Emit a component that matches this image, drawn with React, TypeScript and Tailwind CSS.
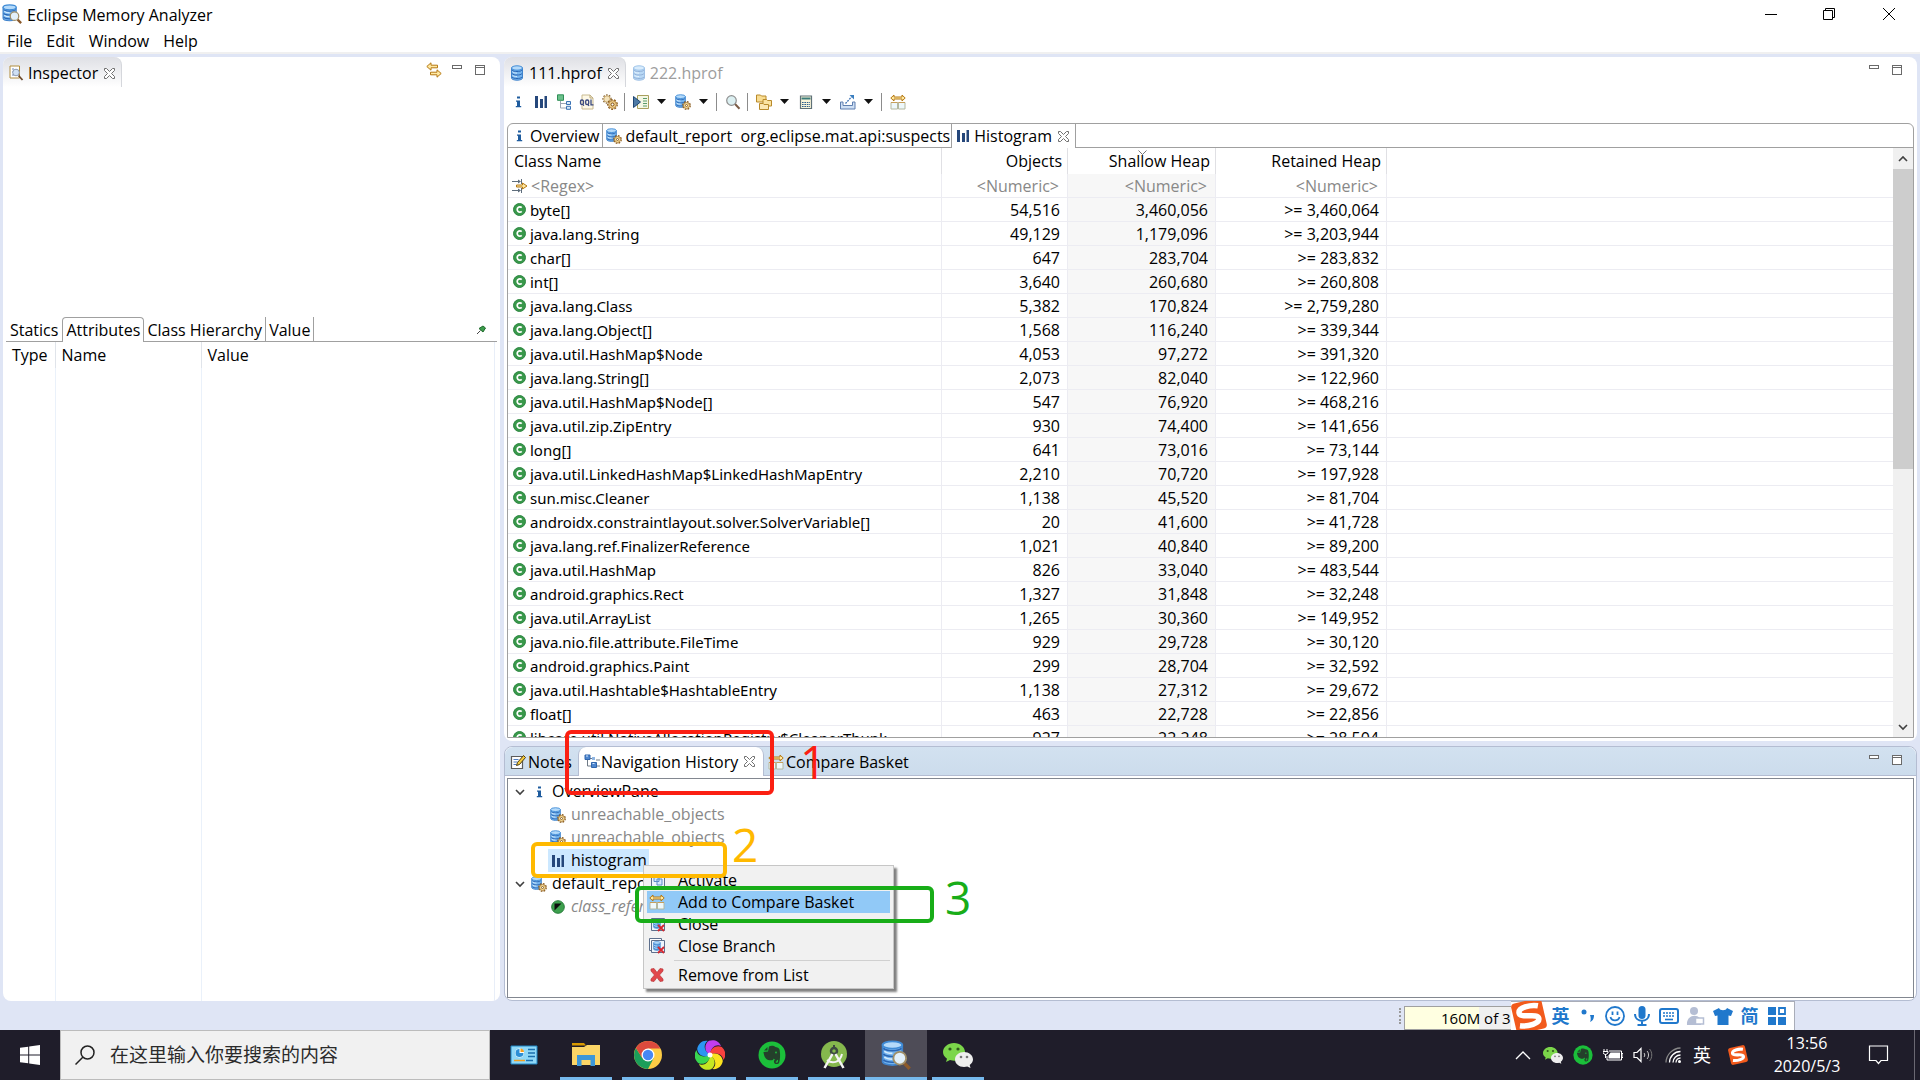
import type { ReactNode } from 'react'
import { clsx } from 'clsx'

type IconProps = { className?: string }

function Svg({ className, box = 16, children }: { className?: string; box?: number; children: ReactNode }) {
  return (
    <svg viewBox={`0 0 ${box} ${box}`} className={clsx('shrink-0', className ?? 'size-4')} fill="none" aria-hidden>
      {children}
    </svg>
  )
}

/* ---------- editor icons ---------- */

function DbShape() {
  return (
    <>
      <path d="M2.500 3v10c0 1.200 2.400 2.200 5.500 2.200s5.500-1 5.500-2.200V3z" fill="#74b4ee" stroke="#3f83cc" />
      <path d="M3 5c1 1.300 3 1.500 5 1.500s4-.2 5-1.500M3 8.500c1 1.300 3 1.500 5 1.500s4-.2 5-1.500M3 12c1 1.300 3 1.500 5 1.500s4-.2 5-1.500" stroke="#2b66b4" />
      <path d="M3.500 6.800c1 1 2.500 1.300 4.500 1.300M3.500 10.300c1 1 2.500 1.300 4.500 1.300" stroke="#d6ecfd" />
      <ellipse cx="8" cy="3" rx="5.500" ry="2.200" fill="#b4dafa" stroke="#3f8bd6" />
    </>
  )
}

function DbIcon({ className }: IconProps) {
  return (
    <Svg className={className}>
      <DbShape />
    </Svg>
  )
}

function GearShape() {
  return (
    <>
      <circle cx="11.500" cy="11.500" r="3.700" stroke="#8a5a1a" strokeWidth="1.400" strokeDasharray="1.700 1.200" />
      <circle cx="11.500" cy="11.500" r="3" fill="#f3d996" stroke="#a87833" strokeWidth=".8" />
      <circle cx="11.500" cy="11.500" r="1" fill="#fff" stroke="#7a4d14" strokeWidth=".8" />
    </>
  )
}

function DbGearIcon({ className }: IconProps) {
  return (
    <Svg className={className}>
      <g transform="translate(-1.500 0) scale(.88)">
        <DbShape />
      </g>
      <GearShape />
    </Svg>
  )
}

function DbSearchIcon({ className }: IconProps) {
  return (
    <Svg className={className}>
      <g transform="translate(-1.500 0) scale(.95 .88)">
        <DbShape />
      </g>
      <path d="m12.300 12.300 3 3" stroke="#8b5a2b" strokeWidth="1.800" />
      <circle cx="10" cy="9.700" r="3.400" fill="#e2f0fb" stroke="#a08f68" />
    </Svg>
  )
}

function InspectorIcon() {
  return (
    <Svg>
      <path d="M2 1h9.500v12H2z" fill="#fff" stroke="#b08c3c" />
      <path d="M4 4h2M4 7h1M4 10h2" stroke="#6b87b8" />
      <path d="m10.500 10.500 4 4.500" stroke="#6e4a2c" strokeWidth="1.800" />
      <circle cx="8" cy="7.500" r="3.300" fill="#cfe0f4" stroke="#8d9bb2" />
    </Svg>
  )
}

function InfoIcon() {
  return (
    <Svg>
      <path d="M7 2.500h3v2H7zM6 6.500h4V12h1.200v1.200H5.800V12H7V7.700H6z" fill="#1f5c9e" />
    </Svg>
  )
}

function BarsIcon() {
  return (
    <Svg>
      <path d="M2 2h3v12H2zM7 5h3v9H7zM11.500 2h2.500v12h-2.500z" fill="#25477b" />
    </Svg>
  )
}

function TreeIcon() {
  return (
    <Svg>
      <path d="M4.500 7v7H10M4.500 9.500H10" stroke="#9aa4b4" />
      <path d="M1.500.8h6v5.500h-6z" fill="#6cc08b" stroke="#2f8f57" />
      <path d="M10.500 7.500h4v3h-4zM10.500 12.300h4v3h-4z" fill="#d7e9fb" stroke="#3a72b4" />
    </Svg>
  )
}

function OqlIcon() {
  return (
    <Svg>
      <path d="M3 1h8l3 3v11H3z" fill="#fdf8e6" stroke="#c9ba90" />
      <path d="M11 1v3h3" stroke="#b9a779" />
      <rect x="1.500" y="6" width="3" height="4.500" rx="1.300" stroke="#3b4a80" strokeWidth="1.300" />
      <path d="M3.500 10 5 12" stroke="#3b4a80" />
      <rect x="6.700" y="6" width="3" height="4.500" rx="1.300" stroke="#3b4a80" strokeWidth="1.300" />
      <path d="m8.700 10 1.300 2M12 5.500v5.300h2.500" stroke="#3b4a80" strokeWidth="1.300" />
    </Svg>
  )
}

function GearsIcon() {
  return (
    <Svg>
      <circle cx="5" cy="5" r="4" stroke="#8a6a3a" strokeWidth="1.400" strokeDasharray="1.600 1.300" />
      <circle cx="5" cy="5" r="3.200" fill="#f3e3bb" stroke="#c09a5a" strokeWidth=".8" />
      <circle cx="10.500" cy="10.500" r="4.700" stroke="#8a5a1a" strokeWidth="1.400" strokeDasharray="1.900 1.400" />
      <circle cx="10.500" cy="10.500" r="3.900" fill="#efcf8a" stroke="#a87833" strokeWidth=".8" />
      <circle cx="10.500" cy="10.500" r="1.500" fill="#fff" stroke="#7a4d14" />
    </Svg>
  )
}

function RunReportIcon() {
  return (
    <Svg>
      <path d="M4.500 1.500h11v13h-11z" fill="#f4f7e4" stroke="#a9a05e" />
      <path d="M10 4.500h4M10 7h4M10 9.500h4M10 12h4" stroke="#5b9c6b" />
      <path d="M.5 2.500 7.500 8l-7 5.500z" fill="#4d7aa5" stroke="#1f4673" />
    </Svg>
  )
}

function MagnifierIcon() {
  return (
    <Svg>
      <path d="m9.800 9.800 4.700 5" stroke="#7a5a44" strokeWidth="2" />
      <circle cx="6.500" cy="6.500" r="4.800" fill="#dcf0f2" stroke="#8f8f8f" strokeWidth="1.200" />
    </Svg>
  )
}

function FoldersIcon() {
  return (
    <Svg>
      <path d="M.5 1h4l1 1h4.500v6H.500z" fill="#f9dd92" stroke="#b98a2b" />
      <path d="M7 5.500h3.500l1 1h4V12H7z" fill="#fbe3a0" stroke="#b98a2b" />
      <path d="M3.500 9.500H7l1 1h4.500v5h-9z" fill="#fbe7b2" stroke="#b98a2b" />
    </Svg>
  )
}

function CalcIcon() {
  return (
    <Svg>
      <path d="M2.500 2h11v12.500h-11z" fill="#fbf6da" stroke="#5f7178" strokeWidth="1.200" />
      <path d="M3.500 3.500h9v2h-9z" fill="#3b7c7a" />
      <path d="M4 8.500h8M4 10.500h8M4 12.500h8" stroke="#2d5f8f" strokeWidth="1.200" strokeDasharray="1.600 .8" />
    </Svg>
  )
}

function ExportIcon() {
  return (
    <Svg>
      <path d="M.5 8v7h14.500V8h-2.500v3.500H3V8z" fill="#cfe0f4" stroke="#5f7fb0" />
      <path d="m5.500 9.500 6-6.500" stroke="#3a6fb2" strokeWidth="1.300" strokeDasharray="1.800 1" />
      <path d="M9.500 1H14v4.500z" fill="#3a7fc0" />
    </Svg>
  )
}

function CompareIcon({ className }: IconProps) {
  return (
    <Svg className={className}>
      <path d="M.8 4 4 1v2h8V1l3.200 3L12 7V5H4v2z" fill="#ffe9a3" stroke="#b57812" />
      <path d="M1 8.500h6.500v6.500H1zM8.500 8.500H15v6.500H8.500z" fill="#eef8fb" stroke="#b3b8a0" />
      <path d="M1 8.500h6.500M8.500 8.500H15" stroke="#c79f5a" />
    </Svg>
  )
}

function CaretDown() {
  return (
    <Svg className="size-[9px]" box={9}>
      <path d="M0 2h9L4.500 7z" fill="#111" />
    </Svg>
  )
}

function CloseX({ className }: IconProps) {
  return (
    <Svg className={clsx('size-[11px]', className)} box={11}>
      <path d="M.5.5h2l3 3 3-3h2v2l-3 3 3 3v2h-2l-3-3-3 3h-2v-2l3-3-3-3z" fill="#fff" stroke="#6f6f6f" />
    </Svg>
  )
}

function RegexIcon() {
  return (
    <Svg>
      <path d="M0 3.500h8M0 12.500h8M9.500 1v5M9.500 10v5" stroke="#5e6d7c" />
      <path d="m6 1.500 3 2-3 2zM6 10.500l3 2-3 2z" fill="#5e6d7c" />
      <path d="M4.500 7h6V5l4.500 3-4.500 3V9h-6z" fill="#ffe9a3" stroke="#b57812" />
    </Svg>
  )
}

function ClassIcon() {
  return (
    <Svg className="size-[13px]" box={13}>
      <circle cx="6.500" cy="6.500" r="6" fill="#38984a" stroke="#2f8743" />
      <path d="M8.700 4.700A2.600 2.600 0 1 0 8.700 8.300" stroke="#fff" strokeWidth="1.700" />
    </Svg>
  )
}

function NavHistoryIcon() {
  return (
    <Svg>
      <path d="M3.500 5v7H9M3.500 4.500H9M12 6h4M13 12h3" stroke="#6f7a86" />
      <path d="M1 1h5v4.500H1z" fill="#4d86cf" stroke="#2f65ac" />
      <path d="M7.500 8.500h5v5h-5z" fill="#4d86cf" stroke="#2f65ac" />
      <path d="M8 3h3v3H8z" fill="#8fb5e2" />
      <path d="M2 2h2M8.500 9.500h2" stroke="#d5e7fb" />
    </Svg>
  )
}

function NotesIcon() {
  return (
    <Svg>
      <path d="M1.500 2.500h11v12h-11z" fill="#fff" stroke="#5c5c5c" strokeWidth="1.200" />
      <path d="M3.500 5.500h5M3.500 8h4M3.500 10.500h3" stroke="#4f7dc0" />
      <path d="m6.500 11.500 1-3 6-7 2 2-6 7z" fill="#f6cc3d" stroke="#4c3b12" />
    </Svg>
  )
}

function LinkEditorIcon() {
  return (
    <Svg>
      <path d="M.8 4.500 5 .8v2.400h6.500v2.600H5v2.400z" fill="#ffe9a3" stroke="#b57812" />
      <path d="M15.200 11.500 11 7.800v2.400H4.500v2.600H11v2.400z" fill="#ffe9a3" stroke="#b57812" />
    </Svg>
  )
}

function PinIcon() {
  return (
    <Svg className="size-[9px]" box={9}>
      <path d="M0 9 3.500 5.500" stroke="#444" />
      <path d="M2 3.500 6 1 8.500 3 6 7z" fill="#3c9c4c" stroke="#1f6b2c" />
    </Svg>
  )
}

function ChevronDown({ className }: IconProps) {
  return (
    <Svg className={clsx('h-[10px] w-[10px]', className)} box={10}>
      <path d="m1 3 4 4 4-4" stroke="#404040" strokeWidth="1.600" />
    </Svg>
  )
}

function WindowIcon({ stacked, close }: { stacked?: boolean; close?: boolean }) {
  return (
    <Svg>
      {stacked && <path d="M.5.5h12v12H.5z" fill="#fff" stroke="#5d6f8c" />}
      <path d="M2.500 2.500h13v12h-13z" fill="#eef4fb" stroke="#5d6f8c" />
      {close ? (
        <>
          <g transform="translate(3 3) scale(.62)">
            <DbShape />
          </g>
          <path d="m9 9 6 6M15 9l-6 6" stroke="#d5272f" strokeWidth="1.800" />
        </>
      ) : (
        <path d="M5 4.500h5v5H5zM8 7h5v6H8z" fill="#d5e7fb" stroke="#5b8cc6" />
      )}
    </Svg>
  )
}

function RemoveIcon() {
  return (
    <Svg>
      <path d="m2 2 3-.5 3 4 3-4 3 .5v2l-3.500 4 3.500 4v2l-3 .5-3-4-3 4-3-.5v-2l3.500-4L2 4z" fill="#e2474b" stroke="#b9383c" strokeWidth=".7" />
    </Svg>
  )
}

function RefIcon() {
  return (
    <Svg className="size-[14px]" box={14}>
      <circle cx="7" cy="7" r="6.300" fill="#3da04d" stroke="#2a7d3d" />
      <path d="M3.500 3.500h7l-7 7z" fill="#0d0d0d" />
    </Svg>
  )
}

/* ---------- taskbar icons ---------- */

function SogouIcon({ className }: IconProps) {
  return (
    <Svg className={className} box={36}>
      <g transform="rotate(-13 18 18)">
        <rect x="2.500" y="2.500" width="31" height="31" rx="4" fill="#f25a1c" />
        <path d="M29 10C22 7 9 7.500 9 13c0 6 18 3.500 18 9.500 0 5-12 6-20 3" stroke="#fff" strokeWidth="5.500" />
      </g>
    </Svg>
  )
}

function WeChatIcon({ className }: IconProps) {
  return (
    <Svg className={className} box={30}>
      <path d="M11 3C5 3 0 7 0 12c0 3 1.500 5 4 6.700L3 22l4-2c8 2.500 15-2 15-8 0-5-5-9-11-9z" fill="#7bd64a" />
      <path d="M21 12c-5 0-9 3.200-9 7.500s4 7.500 9 7.500c1.200 0 2.300-.2 3.300-.5L27.500 28l-.8-3c2-1.400 3.300-3.300 3.300-5.500 0-4.300-4-7.500-9-7.500z" fill="#eeeeee" />
      <circle cx="7" cy="9" r="1.600" fill="#2f5a1c" />
      <circle cx="15" cy="9" r="1.600" fill="#2f5a1c" />
      <circle cx="18" cy="17" r="1.300" fill="#777" />
      <circle cx="24" cy="17" r="1.300" fill="#777" />
    </Svg>
  )
}

function EvernoteIcon({ className }: IconProps) {
  return (
    <Svg className={className} box={28}>
      <circle cx="14" cy="14" r="13.500" fill="#1bbf3a" />
      <path d="M11 5.500c2-1 5-.8 6.500.5 3 .3 4 1.500 4.300 4 .5 4 .4 8-.6 11.500-.6 2-4.700 2.300-5.200-.3-.4-2 1-3 2.800-2.500v1.500c-1.400-.2-1.600 1.300-.3 1.500 1.700.1 1.700-1.500 1.300-3-1.500.5-3.300.2-4-1.200-.5 1.800-2 2-4.300 1.700C8 18.700 6 16 5.500 11L10 10.500z" fill="#24402b" />
      <path d="M9.500 6v3.500H6z" fill="#24402b" />
      <circle cx="18" cy="11.500" r=".9" fill="#1bbf3a" />
    </Svg>
  )
}

function WindowsIcon() {
  return (
    <Svg className="size-5" box={20}>
      <path d="M0 2.800 8.200 1.700v7.700H0zM9.200 1.500 20 0v9.400H9.200zM0 10.400h8.200v7.900L0 17.200zM9.200 10.400H20V20L9.200 18.500z" fill="#fff" />
    </Svg>
  )
}

function CardIcon() {
  return (
    <Svg className="size-7" box={28}>
      <path d="M1 5h26v18H1z" fill="#8fd8f8" stroke="#1f86c4" />
      <circle cx="9.500" cy="12" r="4.500" fill="#fff" />
      <path d="M9.500 12V8a4 4 0 1 0 4 4z" fill="#2b8fd6" />
      <path d="M10.500 11V7.500a4 4 0 0 1 3.500 3.500z" fill="#f4a020" />
      <path d="M18 8.500h7M18 12h7M18 15.500h7" stroke="#1b6fae" strokeWidth="1.500" />
      <path d="M4 19.500h11" stroke="#f4a020" strokeWidth="1.500" />
      <path d="M16 19.500h7" stroke="#1b6fae" strokeWidth="1.500" />
    </Svg>
  )
}

function FolderIcon() {
  return (
    <Svg className="size-7" box={28}>
      <path d="M0 2h12l2 2.500H0z" fill="#d99a00" />
      <path d="M0 6h12l3-2h13v20H0z" fill="#fbd566" />
      <path d="M5 25V14h18v11h-4.500v-6h-9v6z" fill="#3d97d8" />
    </Svg>
  )
}

function ChromeIcon() {
  return (
    <Svg className="size-7" box={28}>
      <circle cx="14" cy="14" r="14" fill="#fdcc45" />
      <path d="M14 28A14 14 0 0 1 1.900 7l6.500 10.200L19.600 17.200z" fill="#1b9e5a" />
      <path d="M26.400 7.500H14l-5.600 9.700L1.900 7a14 14 0 0 1 24.500.5z" fill="#dc4a3d" />
      <circle cx="14" cy="14" r="6.500" fill="#fff" />
      <circle cx="14" cy="14" r="5.200" fill="#4687f4" />
    </Svg>
  )
}

const PETALS = [
  { angle: 0, fill: '#c33df0' },
  { angle: 60, fill: '#f8423f' },
  { angle: 120, fill: '#fbe21f' },
  { angle: 180, fill: '#c6e622' },
  { angle: 240, fill: '#39d650' },
  { angle: 300, fill: '#2b96f2' },
]

function PinwheelIcon() {
  return (
    <Svg className="size-[30px]" box={30}>
      {PETALS.map((p) => (
        <path
          key={p.angle}
          d="M15 15C9 12 9 4 14 .8c5-1.500 10 0 12 5.200-4-2-10 0-11 9z"
          fill={p.fill}
          transform={`rotate(${p.angle} 15 15)`}
        />
      ))}
      <circle cx="15" cy="15" r="2.500" fill="#fff" />
    </Svg>
  )
}

function AndroidStudioIcon() {
  return (
    <Svg className="size-7" box={28}>
      <circle cx="14" cy="13" r="13" fill="#85b84d" />
      <circle cx="14" cy="10" r="3" stroke="#3d4a42" strokeWidth="2.500" />
      <path d="M14 4v4" stroke="#3d4a42" strokeWidth="2" />
      <path d="M12.500 13 4.500 27M15.500 13l8 14" stroke="#f4f4f4" strokeWidth="2.500" />
      <path d="M7 19c5 4 13 3 15-6" stroke="#f4f4f4" strokeWidth="2" />
    </Svg>
  )
}

/* ---------- data ---------- */

const ROWS = [
  ['byte[]', '54,516', '3,460,056', '3,460,064'],
  ['java.lang.String', '49,129', '1,179,096', '3,203,944'],
  ['char[]', '647', '283,704', '283,832'],
  ['int[]', '3,640', '260,680', '260,808'],
  ['java.lang.Class', '5,382', '170,824', '2,759,280'],
  ['java.lang.Object[]', '1,568', '116,240', '339,344'],
  ['java.util.HashMap$Node', '4,053', '97,272', '391,320'],
  ['java.lang.String[]', '2,073', '82,040', '122,960'],
  ['java.util.HashMap$Node[]', '547', '76,920', '468,216'],
  ['java.util.zip.ZipEntry', '930', '74,400', '141,656'],
  ['long[]', '641', '73,016', '73,144'],
  ['java.util.LinkedHashMap$LinkedHashMapEntry', '2,210', '70,720', '197,928'],
  ['sun.misc.Cleaner', '1,138', '45,520', '81,704'],
  ['androidx.constraintlayout.solver.SolverVariable[]', '20', '41,600', '41,728'],
  ['java.lang.ref.FinalizerReference', '1,021', '40,840', '89,200'],
  ['java.util.HashMap', '826', '33,040', '483,544'],
  ['android.graphics.Rect', '1,327', '31,848', '32,248'],
  ['java.util.ArrayList', '1,265', '30,360', '149,952'],
  ['java.nio.file.attribute.FileTime', '929', '29,728', '30,120'],
  ['android.graphics.Paint', '299', '28,704', '32,592'],
  ['java.util.Hashtable$HashtableEntry', '1,138', '27,312', '29,672'],
  ['float[]', '463', '22,728', '22,856'],
  ['libcore.util.NativeAllocationRegistry$CleanerThunk', '927', '22,248', '28,504'],
]

const TOOLS: { label: string; icon?: ReactNode; menu?: boolean; divider?: boolean }[] = [
  { label: 'Overview', icon: <InfoIcon /> },
  { label: 'Histogram', icon: <BarsIcon /> },
  { label: 'Dominator tree', icon: <TreeIcon /> },
  { label: 'OQL', icon: <OqlIcon /> },
  { label: 'Thread overview', icon: <GearsIcon /> },
  { label: 'd1', divider: true },
  { label: 'Run report', icon: <RunReportIcon />, menu: true },
  { label: 'Query browser', icon: <DbGearIcon />, menu: true },
  { label: 'd2', divider: true },
  { label: 'Find', icon: <MagnifierIcon /> },
  { label: 'd3', divider: true },
  { label: 'Group', icon: <FoldersIcon />, menu: true },
  { label: 'Calculate', icon: <CalcIcon />, menu: true },
  { label: 'Export', icon: <ExportIcon />, menu: true },
  { label: 'd4', divider: true },
  { label: 'Compare', icon: <CompareIcon /> },
]

const TASKS = [
  { label: 'Control Panel', icon: <CardIcon />, running: false },
  { label: 'File Explorer', icon: <FolderIcon />, running: true },
  { label: 'Chrome', icon: <ChromeIcon />, running: true },
  { label: 'Browser', icon: <PinwheelIcon />, running: true },
  { label: 'Evernote', icon: <EvernoteIcon className="size-7" />, running: true },
  { label: 'Android Studio', icon: <AndroidStudioIcon />, running: true },
  { label: 'Eclipse Memory Analyzer', icon: <DbSearchIcon className="size-[30px]" />, running: true, active: true },
  { label: 'WeChat', icon: <WeChatIcon className="size-[30px]" />, running: true },
]

/* ---------- shared bits ---------- */

function PaneButtons({ className }: IconProps) {
  return (
    <div className={clsx('ml-auto flex gap-[13px]', className)}>
      <button type="button" aria-label="Minimize" className="flex size-[10px]">
        <span className="h-1 w-full border border-[#6a6a6a] bg-white" />
      </button>
      <button type="button" aria-label="Maximize" className="flex size-[10px] border border-[#6a6a6a] bg-white">
        <span className="h-[2px] w-full border-b border-[#6a6a6a]" />
      </button>
    </div>
  )
}

/* ---------- window chrome ---------- */

function TitleBar() {
  return (
    <header className="bg-white">
      <div className="flex h-7 items-center pl-[2px]">
        <DbSearchIcon className="size-5" />
        <h1 className="ml-[5px] pt-px">Eclipse Memory Analyzer</h1>
        <div className="ml-auto flex">
          <button type="button" aria-label="Minimize" className="flex h-7 w-[58px] items-center justify-center">
            <span className="h-px w-3 bg-black" />
          </button>
          <button type="button" aria-label="Restore" className="flex h-7 w-[58px] items-center justify-center">
            <Svg className="size-3" box={12}>
              <path d="M.5 2.500h9v9h-9zM2.500 2.500v-2h9v9h-2" stroke="#000" />
            </Svg>
          </button>
          <button type="button" aria-label="Close" className="flex h-7 w-[62px] items-center justify-center">
            <Svg className="size-3" box={12}>
              <path d="m0 0 12 12M12 0 0 12" stroke="#000" />
            </Svg>
          </button>
        </div>
      </div>
      <nav className="flex h-[26px] gap-[14px] border-b-2 border-[#f0f0f0] pt-[3px] pl-[7px]">
        {['File', 'Edit', 'Window', 'Help'].map((item) => (
          <button key={item} type="button" className="h-5 leading-5">
            {item}
          </button>
        ))}
      </nav>
    </header>
  )
}

function Inspector() {
  return (
    <section className="flex w-[497px] flex-col rounded-lg bg-white">
      <div className="flex h-[30px]">
        <button
          type="button"
          className="flex w-[119px] items-center rounded-t-lg border-r border-[#d5d7dc] bg-linear-to-b from-[#dfe0e5] to-white pt-[2px] pl-[5px]"
        >
          <InspectorIcon />
          <span className="ml-1">Inspector</span>
          <CloseX className="ml-[6px]" />
        </button>
        <div className="ml-auto flex pt-[5px] pr-[15px]">
          <button type="button" aria-label="Link with editor" className="mr-[10px] h-4">
            <LinkEditorIcon />
          </button>
          <PaneButtons className="pt-[3px]" />
        </div>
      </div>
      <div className="mt-[230px] flex h-[25px] items-stretch pr-[3px] pl-[3px] whitespace-nowrap">
        <button type="button" className="border-b border-[#a0a0a0] px-1 pt-px">Statics</button>
        <button type="button" className="rounded-t-sm border border-b-0 border-[#a0a0a0] px-[3px]">Attributes</button>
        <button type="button" className="border-r border-b border-[#a0a0a0] px-[3px] pt-px">Class Hierarchy</button>
        <button type="button" className="border-r border-b border-[#a0a0a0] px-[3px] pt-px">Value</button>
        <div className="flex flex-1 items-center justify-end border-b border-[#a0a0a0] pr-[11px]">
          <PinIcon />
        </div>
      </div>
      <div className="mr-[5px] flex flex-1 border-r border-[#e8eef8]">
        <table className="h-full w-full table-fixed text-left">
          <colgroup>
            <col className="w-[52px]" />
            <col className="w-[146px]" />
            <col />
          </colgroup>
          <thead>
            <tr className="h-[26px]">
              <th className="border-r border-[#e0e4ea] pl-[9px] font-normal">Type</th>
              <th className="border-r border-[#e0e4ea] pl-[6px] font-normal">Name</th>
              <th className="pl-[6px] font-normal">Value</th>
            </tr>
          </thead>
          <tbody>
            <tr>
              <td className="border-r border-[#eaf1fa]" />
              <td className="border-r border-[#eaf1fa]" />
              <td />
            </tr>
          </tbody>
        </table>
      </div>
    </section>
  )
}

function Toolbar() {
  return (
    <div className="flex h-[29px] items-center pl-[2px]">
      {TOOLS.map((tool) =>
        tool.divider ? (
          <span key={tool.label} className="mx-[3px] h-[18px] w-[2px] border-l border-[#8c8c8c]" />
        ) : (
          <button key={tool.label} type="button" aria-label={tool.label} className="flex items-center">
            <span className="flex w-[23px] justify-center">{tool.icon}</span>
            {tool.menu && (
              <span className="flex w-[19px] justify-center">
                <CaretDown />
              </span>
            )}
          </button>
        ),
      )}
    </div>
  )
}

function Histogram() {
  const line = 'border-r border-b border-[#ececf2]'
  return (
    <div className="flex min-h-0 flex-1">
      <div className="min-h-0 flex-1 overflow-hidden">
        <table className="w-full table-fixed border-separate border-spacing-0 text-right whitespace-nowrap">
          <colgroup>
            <col className="w-[434px]" />
            <col className="w-[126px]" />
            <col className="w-[148px]" />
            <col className="w-[171px]" />
            <col />
          </colgroup>
          <thead>
            <tr className="h-[26px]">
              <th className="border-r border-[#e0e0e4] pl-[6px] text-left font-normal">Class Name</th>
              <th className="border-r border-[#e0e0e4] pr-[5px] font-normal">Objects</th>
              <th className="relative border-r border-[#e0e0e4] pr-[5px] font-normal">
                <Svg className="absolute top-0 left-[70px] size-[9px]" box={9}>
                  <path d="m.5 2.500 4 4 4-4" stroke="#777" />
                </Svg>
                Shallow Heap
              </th>
              <th className="border-r border-[#e0e0e4] pr-[5px] font-normal">Retained Heap</th>
              <th />
            </tr>
          </thead>
          <tbody>
            <tr className="h-6 text-[#888]">
              <td className={clsx(line, 'text-left')}>
                <span className="flex items-center gap-[3px] pl-1">
                  <RegexIcon />
                  &lt;Regex&gt;
                </span>
              </td>
              <td className={clsx(line, 'pr-2')}>&lt;Numeric&gt;</td>
              <td className={clsx(line, 'bg-[#f7f7f7] pr-2')}>&lt;Numeric&gt;</td>
              <td className={clsx(line, 'pr-2')}>&lt;Numeric&gt;</td>
              <td className="border-b border-[#ececf2]" />
            </tr>
            {ROWS.map(([name, objects, shallow, retained]) => (
              <tr key={name} className="h-6">
                <td className={clsx(line, "text-left font-['Noto_Sans',sans-serif] text-[15px]")}>
                  <span className="flex items-center gap-1 pl-[5px]">
                    <ClassIcon />
                    {name}
                  </span>
                </td>
                <td className={clsx(line, 'pr-[7px]')}>{objects}</td>
                <td className={clsx(line, 'bg-[#f7f7f7] pr-[7px]')}>{shallow}</td>
                <td className={clsx(line, 'pr-[7px]')}>&gt;= {retained}</td>
                <td className="border-b border-[#ececf2]" />
              </tr>
            ))}
          </tbody>
        </table>
      </div>
      <div className="flex w-5 flex-col items-center bg-[#f0f0f0]">
        <div className="flex h-[21px] items-center">
          <ChevronDown className="rotate-180" />
        </div>
        <div className="h-[300px] w-full bg-[#cdcdcd]" />
        <div className="mt-auto flex h-[21px] items-center">
          <ChevronDown />
        </div>
      </div>
    </div>
  )
}

function Editor() {
  return (
    <section className="flex min-h-0 flex-1 flex-col rounded-lg bg-white pr-[3px] pb-[3px]">
      <div className="flex h-[30px]">
        <button
          type="button"
          className="flex items-center rounded-t-lg border-r border-[#d5d7dc] bg-linear-to-b from-[#dfe0e5] to-white pt-[2px] pr-[6px] pl-[5px]"
        >
          <DbIcon />
          <span className="ml-1">111.hprof</span>
          <CloseX className="ml-[6px]" />
        </button>
        <button type="button" className="flex items-center pt-[2px] pl-[5px] text-[#9d9d9d]">
          <DbIcon className="size-4 opacity-50" />
          <span className="ml-[3px]">222.hprof</span>
        </button>
        <PaneButtons className="pt-2 pr-3" />
      </div>
      <Toolbar />
      <div className="mt-[7px] ml-[3px] flex min-h-0 flex-1 flex-col overflow-hidden rounded-t-md border border-[#a0a0a0]">
        <div className="flex h-6 shrink-0">
          <button type="button" className="flex items-center border-r border-b border-[#a0a0a0] pr-[3px] pl-[3px]">
            <InfoIcon />
            <span className="ml-[3px]">Overview</span>
          </button>
          <button type="button" className="flex items-center border-r border-b border-[#a0a0a0] pr-px pl-[3px]">
            <DbGearIcon />
            <span className="ml-[3px] whitespace-pre">{'default_report  org.eclipse.mat.api:suspects'}</span>
          </button>
          <button type="button" className="flex items-center border-r border-[#a0a0a0] pr-[6px] pl-[3px]">
            <BarsIcon />
            <span className="ml-[3px]">Histogram</span>
            <CloseX className="ml-[6px]" />
          </button>
          <div className="flex-1 border-b border-[#a0a0a0]" />
        </div>
        <Histogram />
      </div>
    </section>
  )
}

function ContextMenu() {
  const item = 'flex h-[22px] w-full items-center gap-[13px] pl-[2px] text-left'
  return (
    <div className="absolute top-[118px] left-[138px] w-[251px] border border-[#c6c6c6] bg-[#f1f1f1] p-[3px] pb-[2px] shadow-[3px_3px_2px_rgba(0,0,0,0.5)]">
      <button type="button" className={item}>
        <WindowIcon />
        Activate
      </button>
      <button type="button" className={clsx(item, 'bg-[#91c9f7]')}>
        <CompareIcon />
        Add to Compare Basket
      </button>
      <button type="button" className={item}>
        <WindowIcon close />
        Close
      </button>
      <button type="button" className={item}>
        <WindowIcon stacked close />
        Close Branch
      </button>
      <div className="my-[3px] ml-[27px] h-px bg-[#d0d0d0]" />
      <button type="button" className={item}>
        <RemoveIcon />
        Remove from List
      </button>
    </div>
  )
}

function Annotations() {
  return (
    <div className="pointer-events-none absolute inset-0 text-[46px] leading-[46px]">
      <div className="absolute -top-[17px] left-[60px] h-[65px] w-[209px] rounded-md border-4 border-[#fb1f12]" />
      <span className="absolute -top-[9px] left-[295px] text-[#fb1f12]">1</span>
      <div className="absolute top-[95px] left-[26px] h-[36px] w-[196px] rounded-md border-4 border-[#ffb900]" />
      <span className="absolute top-[74px] left-[227px] text-[#ffb900]">2</span>
      <div className="absolute top-[139px] left-[130px] h-[37px] w-[299px] rounded-md border-4 border-[#18ad18]" />
      <span className="absolute top-[127px] left-[440px] text-[#18ad18]">3</span>
    </div>
  )
}

function NavigationHistory() {
  return (
    <section className="relative mt-[5px] flex h-[255px] flex-col rounded-lg border border-[#b4bdd2] bg-white">
      <div className="flex h-[29px] shrink-0 rounded-t-lg border-b border-[#b4bdd2] bg-linear-to-b from-[#d2e1f0] to-[#ccdcec]">
        <button type="button" className="flex w-[73px] items-center pt-px pl-[5px]">
          <NotesIcon />
          <span className="ml-[2px]">Notes</span>
        </button>
        <button
          type="button"
          className="-mb-px flex w-[186px] items-center rounded-t-lg border-x border-[#b4bdd2] bg-white pl-[5px] whitespace-nowrap"
        >
          <NavHistoryIcon />
          <span className="ml-[1px]">Navigation History</span>
          <CloseX className="ml-[6px]" />
        </button>
        <button type="button" className="flex items-center pt-px pl-1">
          <CompareIcon />
          <span className="ml-[2px]">Compare Basket</span>
        </button>
        <PaneButtons className="pt-2 pr-[14px]" />
      </div>
      <ul className="m-[2px] flex-1 border border-[#828790] pt-[1px] leading-[23px] text-[#888]">
        <li className="flex h-[23px] items-center pl-[7px] text-black">
          <ChevronDown />
          <span className="mr-[5px] ml-[6px] flex">
            <InfoIcon />
          </span>
          OverviewPane
        </li>
        <li className="flex h-[23px] items-center gap-[5px] pl-[42px]">
          <DbGearIcon />
          unreachable_objects
        </li>
        <li className="flex h-[23px] items-center gap-[5px] pl-[42px]">
          <DbGearIcon />
          unreachable_objects
        </li>
        <li className="flex h-[23px] pl-[40px] text-black">
          <span className="flex items-center gap-[5px] bg-[#cce8ff] pr-[2px] pl-[2px]">
            <BarsIcon />
            histogram
          </span>
        </li>
        <li className="flex h-[23px] items-center pl-[7px] text-black">
          <ChevronDown />
          <span className="mr-[5px] ml-[6px] flex">
            <DbGearIcon />
          </span>
          default_report
        </li>
        <li className="flex h-[23px] items-center gap-[6px] pl-[43px] italic">
          <RefIcon />
          class_references
        </li>
      </ul>
      <ContextMenu />
      <Annotations />
    </section>
  )
}

/* ---------- status bar and taskbar ---------- */

function ImeSlot({ children }: { children: ReactNode }) {
  return <span className="flex w-[27px] justify-center">{children}</span>
}

function ImeBar() {
  return (
    <div className="-ml-[9px] flex h-[30px] items-center border border-l-0 border-[#a9adb8] bg-white pr-1 text-[18px] font-bold text-[#2078cc]">
      <SogouIcon className="-my-1 size-9" />
      <ImeSlot>英</ImeSlot>
      <ImeSlot>
        <Svg className="size-[14px]" box={14}>
          <circle cx="3" cy="3" r="2.500" fill="#2078cc" />
          <path d="M9 6h4c0 4-1 5.500-4 7 1-2 1-4 0-7z" fill="#2078cc" />
        </Svg>
      </ImeSlot>
      <ImeSlot>
        <Svg className="size-5" box={20}>
          <circle cx="10" cy="10" r="9" stroke="#2078cc" strokeWidth="1.800" />
          <path d="M7.500 5.500v3.500M12.500 5.500v3.500M5.500 11c1 4.500 8 4.500 9 0" stroke="#2078cc" strokeWidth="1.800" />
        </Svg>
      </ImeSlot>
      <ImeSlot>
        <Svg className="size-5" box={20}>
          <rect x="6.500" y="0" width="7" height="13" rx="3.500" fill="#2078cc" />
          <path d="M3 8c0 9 14 9 14 0M10 15v4M5.500 19h9" stroke="#2078cc" strokeWidth="2" />
        </Svg>
      </ImeSlot>
      <ImeSlot>
        <Svg className="size-5" box={20}>
          <rect x="1" y="3" width="18" height="14" rx="2" stroke="#2078cc" strokeWidth="2" />
          <path d="M4 7h12M4 10h12" stroke="#2078cc" strokeWidth="1.600" strokeDasharray="2 1" />
          <path d="M6 13.500h8" stroke="#2078cc" strokeWidth="1.600" />
        </Svg>
      </ImeSlot>
      <ImeSlot>
        <Svg className="size-5" box={20}>
          <circle cx="8" cy="5" r="4" fill="#b5bed4" />
          <path d="M1 19c-1-12 15-12 14-2v2z" fill="#b5bed4" />
          <rect x="9.500" y="12" width="8" height="6" fill="#fff" stroke="#b5bed4" strokeWidth="1.500" />
        </Svg>
      </ImeSlot>
      <ImeSlot>
        <Svg className="size-5" box={20}>
          <path d="M6 2c1 3 7 3 8 0l6 3-2 5-2.500-.5V19h-11V9.500L2 10 0 5z" fill="#2078cc" />
        </Svg>
      </ImeSlot>
      <ImeSlot>简</ImeSlot>
      <ImeSlot>
        <Svg className="size-[18px]" box={18}>
          <path d="M0 0h8v8H0zM0 10h8v8H0zM10 10h8v8h-8z" fill="#2078cc" />
          <path d="M11 1h6v6h-6z" stroke="#2078cc" strokeWidth="1.800" />
        </Svg>
      </ImeSlot>
    </div>
  )
}

function StatusBar() {
  return (
    <div className="flex h-[29px] items-center justify-end pr-[125px]">
      <span className="mr-[3px] h-4 border-l-2 border-dotted border-[#999]" />
      <div className="mt-1 flex h-6 w-[116px] items-center border border-[#a0a0a0] bg-linear-to-r from-[#ffffe1] from-[74px] to-[#f0f0f0] to-[74px] pl-9 text-[15px] whitespace-nowrap">
        160M of 3
      </div>
      <ImeBar />
    </div>
  )
}

function Taskbar() {
  return (
    <footer className="flex h-[50px] shrink-0 items-stretch bg-[#1f1d2a] text-white">
      <button type="button" aria-label="Start" className="flex w-[60px] items-center justify-center">
        <WindowsIcon />
      </button>
      <label className="flex w-[430px] items-center border border-[#bcbcbc] bg-[#f1f1f1] pl-[14px]">
        <Svg className="size-5" box={20}>
          <circle cx="12.500" cy="7.500" r="6.500" stroke="#222" strokeWidth="1.500" />
          <path d="m8 12-7.500 7.500" stroke="#222" strokeWidth="1.500" />
        </Svg>
        <input
          type="text"
          aria-label="Search"
          placeholder="在这里输入你要搜索的内容"
          className="ml-[15px] w-full bg-transparent text-[19px] outline-none placeholder:text-[#2b2b2b]"
        />
      </label>
      <div className="ml-[3px] flex">
        {TASKS.map((task) => (
          <button
            key={task.label}
            type="button"
            aria-label={task.label}
            className={clsx('relative flex w-[62px] items-center justify-center', task.active && 'bg-[#4e4c57]')}
          >
            {task.icon}
            {task.running && (
              <span className={clsx('absolute bottom-0 h-[3px] bg-[#76b9ed]', task.active ? 'inset-x-0' : 'inset-x-[5px]')} />
            )}
          </button>
        ))}
      </div>
      <div className="ml-auto flex items-center gap-[10px]">
        <Svg className="mr-[2px] size-4">
          <path d="m1 12 7-7 7 7" stroke="#fff" strokeWidth="1.300" />
        </Svg>
        <WeChatIcon className="size-5" />
        <EvernoteIcon className="size-5" />
        <Svg className="size-5" box={20}>
          <path d="M6 6h12.500v9H4v-4M19 8.500h1v4h-1" stroke="#fff" />
          <path d="M7.500 7.500H17v6H5.500v-3z" fill="#fff" />
          <path d="M1 4v2M4 4v2M0 6.500h5V8L3 9.500H2L0 8zM2.500 9.500V13" stroke="#fff" />
        </Svg>
        <Svg className="size-5" box={20}>
          <path d="M1 7.500h3l4-4v13l-4-4H1z" stroke="#fff" strokeWidth="1.200" />
          <path d="M11 8c1 1 1 3 0 4M14 6c2 2 2 6 0 8" stroke="#ccc" />
          <path d="M16.500 4c3 3 3 9 0 12" stroke="#777" />
        </Svg>
        <Svg className="size-5" box={20}>
          <path d="M3 17.500A15 15 0 0 1 17.500 3" stroke="#888" strokeWidth="1.300" />
          <path d="M6.500 17.500a11 11 0 0 1 11-11M10 17.500a7.500 7.500 0 0 1 7.500-7.500M13 17.500a4.500 4.500 0 0 1 4.500-4.500" stroke="#fff" strokeWidth="1.300" />
          <circle cx="16.500" cy="16.500" r="1.500" fill="#fff" />
        </Svg>
        <span className="w-[18px] text-[18px]">英</span>
        <SogouIcon className="ml-[7px] size-5" />
        <time className="ml-[15px] w-[68px] text-center leading-[23px]">
          13:56
          <br />
          2020/5/3
        </time>
        <Svg className="ml-[17px] size-[22px]" box={22}>
          <path d="M1.500 2h18v14.500H13l-2.500 3-2.500-3H1.500z" stroke="#fff" strokeWidth="1.200" />
        </Svg>
        <span className="ml-[14px] h-[50px] w-[6px] border-l border-[#6a6872]" />
      </div>
    </footer>
  )
}

export default function App() {
  return (
    <div className="flex h-screen flex-col overflow-hidden bg-[#dfe5f5] font-['Open_Sans','Noto_Sans_CJK_SC',sans-serif] text-[16px] leading-[22px] text-black">
      <TitleBar />
      <main className="flex min-h-0 flex-1 gap-1 pt-[3px] pr-[3px] pl-[3px]">
        <Inspector />
        <div className="flex min-w-0 flex-1 flex-col">
          <Editor />
          <NavigationHistory />
        </div>
      </main>
      <StatusBar />
      <Taskbar />
    </div>
  )
}
